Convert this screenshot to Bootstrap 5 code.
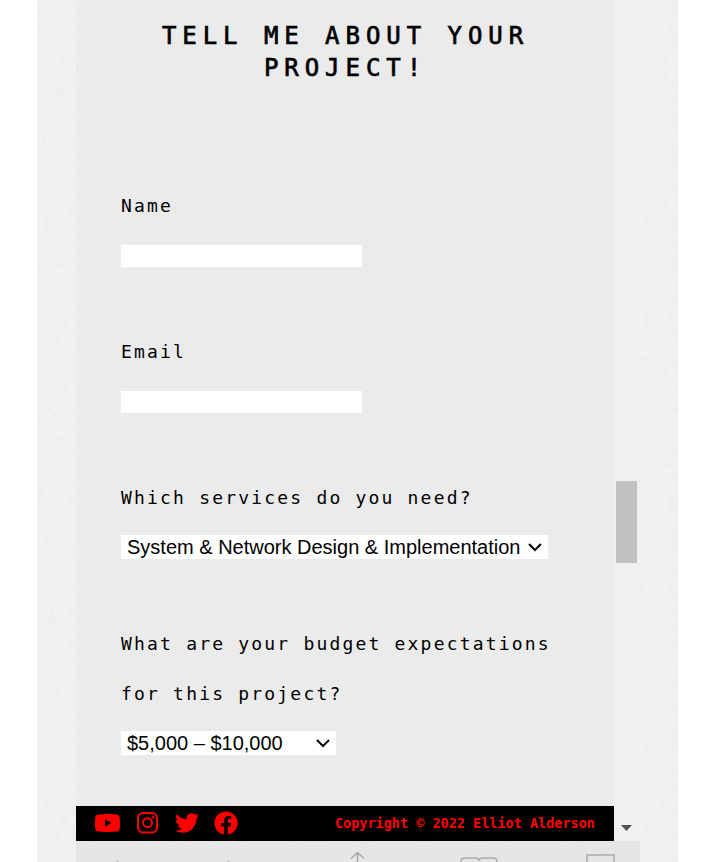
<!DOCTYPE html>
<html lang="en">
<head>
<meta charset="utf-8">
<meta name="viewport" content="width=device-width, initial-scale=1">
<title>Tell me about your project!</title>
<link href="https://cdn.jsdelivr.net/npm/bootstrap@5.3.0/dist/css/bootstrap.min.css" rel="stylesheet">
<style>
body{background:#fff;color:#000;overflow:hidden}
.paper{width:641px;height:862px;margin-left:37px;background:#f1f1f1;padding:0 38px 0 39px}
.grain{position:absolute;left:0;top:0;width:100%;height:100%}
.screen{height:841px}
.page{width:538px;background:#ebebeb;font-family:"DejaVu Sans Mono","Liberation Mono",monospace}
.title{font-size:24px;line-height:32px;letter-spacing:5.95px;font-weight:400;-webkit-text-stroke:.7px #000;padding:20px 44px 0 45px;height:181px;margin:0}
.fields{padding:0 45px;height:625px}
.question{display:block;font-size:18px;line-height:50px;letter-spacing:2.19px;white-space:nowrap}
.entry{display:block;width:241px;height:22px;border:0;border-radius:0;padding:0;background:#fff;margin:14px 0 60px}
.choice{height:24px;background:#fff;border:0;font:20px/24px "Liberation Sans",Arial,sans-serif;padding:0 6px;margin:12px 0 60px}
.w-service{width:427px}
.w-budget{width:215px}
.foot{height:35px;background:#000;color:red;padding:0 19px}
.foot svg{fill:red;display:block}
.icons{gap:15px;padding-bottom:2px}
.copy{font-size:13.5px;font-weight:700}
.track{width:26px;background:#f0f0f0}
.thumb{width:21px;height:82px;background:#c1c1c1;margin:481px 0 0 2px}
.down{width:11px;height:6px;background:#505050;clip-path:polygon(0 0,100% 0,50% 100%);margin:262px 0 0 7px}
.dock{height:21px;width:564px;background:rgba(225,225,225,.65);overflow:hidden}
</style>
</head>
<body>
<main class="paper position-relative overflow-hidden">
<svg class="grain" aria-hidden="true"><filter id="n"><feTurbulence type="fractalNoise" baseFrequency=".16" numOctaves="3"/><feColorMatrix values="0 0 0 0 .8  0 0 0 0 .8  0 0 0 0 .8  .8 0 0 0 -.3"/></filter><rect width="100%" height="100%" filter="url(#n)"/></svg>
<div class="screen d-flex position-relative">
<div class="page">
<h1 class="title text-center">TELL ME ABOUT YOUR PROJECT!</h1>
<form class="fields">
<label class="question" for="name">Name</label>
<input class="entry" id="name">
<label class="question" for="email">Email</label>
<input class="entry" id="email">
<span class="question">Which services do you need?</span>
<div class="choice w-service d-flex align-items-center justify-content-between"><span>System &amp; Network Design &amp; Implementation</span><svg width="14" height="10" fill="none" stroke="#000" stroke-width="2"><path d="M1 2l6 6 6-6"/></svg></div>
<span class="question">What are your budget expectations<br>for this project?</span>
<div class="choice w-budget d-flex align-items-center justify-content-between"><span>$5,000 – $10,000</span><svg width="14" height="10" fill="none" stroke="#000" stroke-width="2"><path d="M1 2l6 6 6-6"/></svg></div>
</form>
<footer class="foot d-flex align-items-center justify-content-between">
<div class="icons d-flex align-items-center">
<svg width="25" height="18" viewBox="0 0 25 18"><path fill-rule="evenodd" d="M3 .4Q12.500-.4 22 .4 24.500.8 24.700 3.300 25.200 9 24.700 14.500 24.500 17.200 22 17.500 12.500 18.400 3 17.500.5 17.200.3 14.500-.2 9 .3 3.300.5.8 3 .4zM10 5.300v7.400L16.500 9z"/></svg>
<svg width="25" height="22" viewBox="0 0 25 22"><g fill="none" stroke="red" stroke-width="2"><rect x="3" y="1" width="19" height="19.500" rx="5"/><circle cx="12.500" cy="10.700" r="4.500"/></g><circle cx="18" cy="5.200" r="1.300"/></svg>
<svg width="24" height="20" viewBox="0 0 512 420"><path d="M459 106c.3 4.500.3 9 .3 13.600C459.300 258 354 418 161 418c-59.500 0-115-17.200-161-47 8.400 1 16.600 1.300 25.300 1.300 49 0 94-16.600 130.300-45-46-1-85-31-98-73 6.500 1 13 1.600 19.800 1.600 9.400 0 18.800-1.300 27.600-3.600C57 242 21 200 21 149v-1.300c14 7.800 30 12.700 47.400 13.300C40 142 21.400 110 21.400 74c0-19.500 5.200-37.400 14.300-53C87.400 85 165 126.500 252 131c-1.600-7.800-2.600-16-2.600-24C249.400 49 296 2 354.500 2c30.200 0 57.500 12.700 76.700 33 23.700-4.500 46.500-13.300 66.600-25.300-7.800 24.400-24.400 45-46 58 21-2.300 41.600-8 60.400-16.300-14.300 20.800-32 39.300-53 54.600z"/></svg>
<svg width="24" height="24" viewBox="0 0 512 512"><path d="M504 256C504 119 393 8 256 8S8 119 8 256c0 124 91 226 209 245V328h-63v-72h63v-55c0-62 37-96.500 93.700-96.500 27 0 55.500 4.800 55.500 4.800v61H335c-31 0-40.400 19-40.400 39V256h68.800l-11 72h-57.800v173C413 482 504 380 504 256z"/></svg>
</div>
<span class="copy">Copyright © 2022 Elliot Alderson</span>
</footer>
</div>
<div class="track"><div class="thumb"></div><div class="down"></div></div>
</div>
<div class="dock position-relative"><svg class="d-block" width="564" height="21" fill="none" stroke="#aaa" stroke-width="1.500"><path d="M281.500 21V11.500M275 17.500l6.500-6 6.500 6M385 21v-.5q0-3.500 4-3.500h10q4 0 4 3 0-3 4-3h10q4 0 4 3.500v.5M511 21v-7h27v7"/><path stroke="#c4c4c4" d="M40 20.500h3M151 20l3 1"/></svg></div>
</main>
<script src="https://cdn.jsdelivr.net/npm/bootstrap@5.3.0/dist/js/bootstrap.bundle.min.js"></script>
</body>
</html>
